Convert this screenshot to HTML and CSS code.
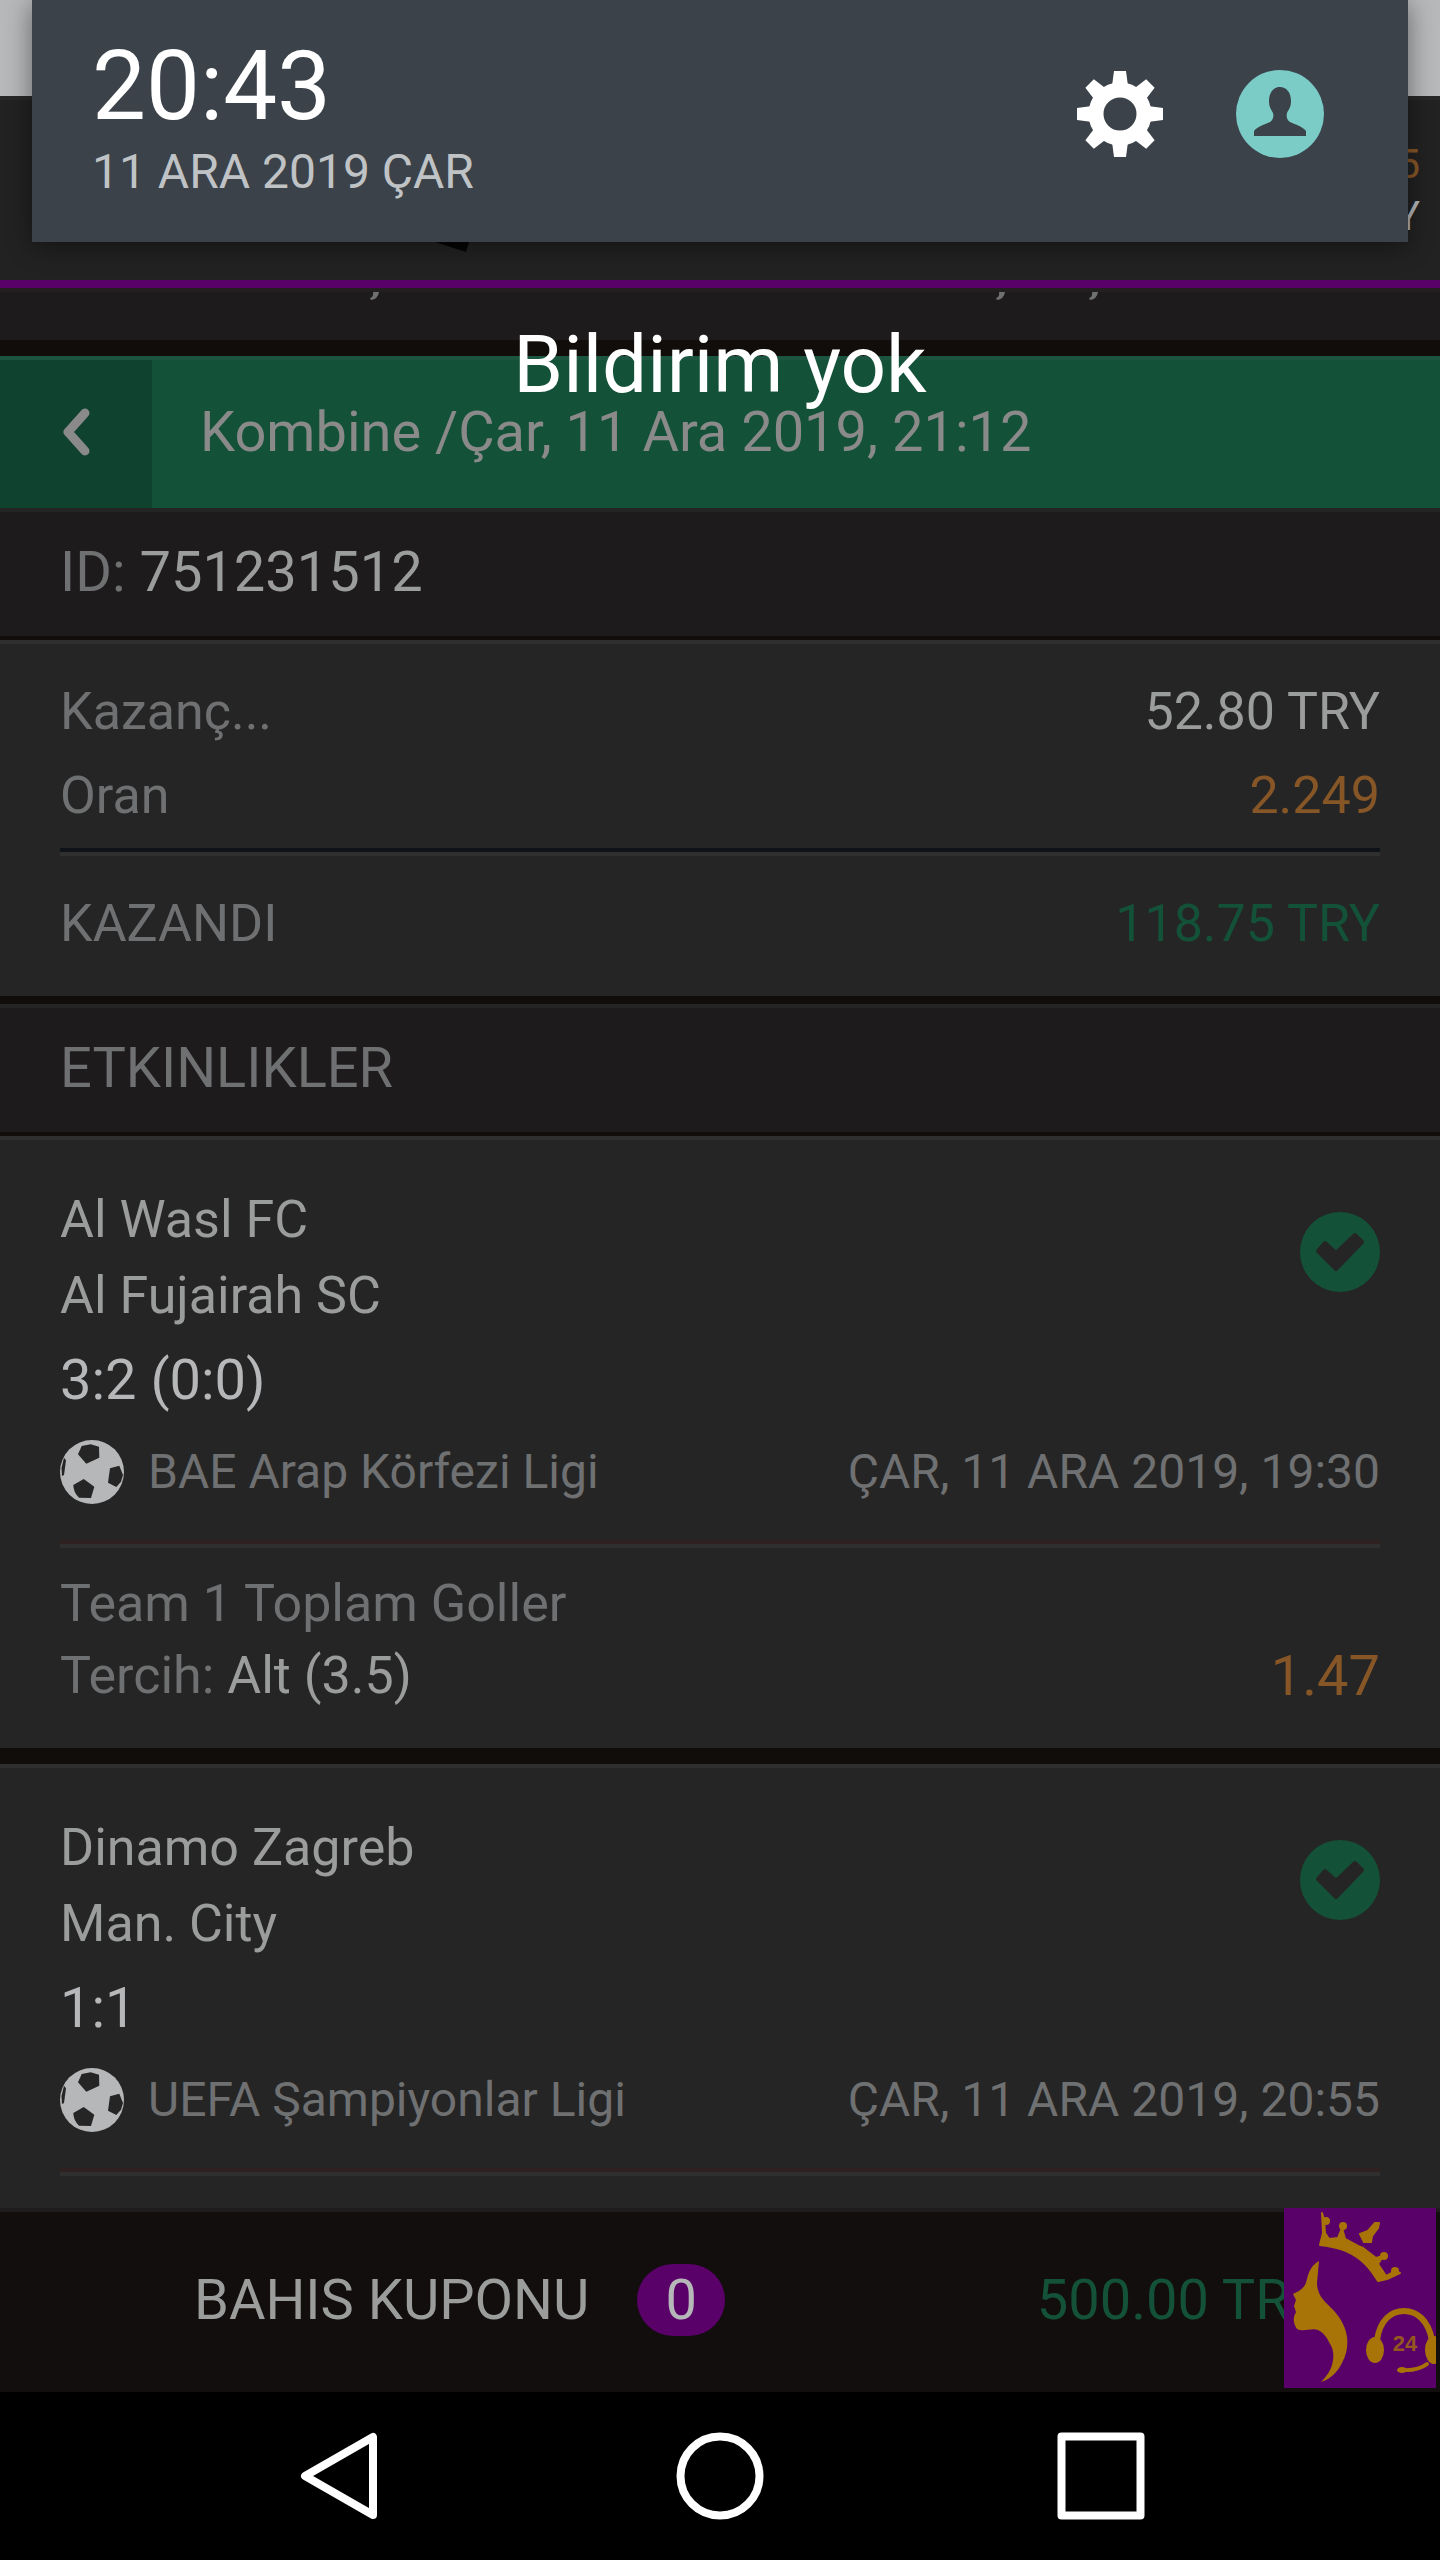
FILE: index.html
```html
<!DOCTYPE html>
<html lang="tr">
<head>
    <meta charset="UTF-8">
    <meta name="viewport" content="width=device-width, initial-scale=1.0">
    <title>Kombine</title>
    <link rel="stylesheet" href="styles.css">
</head>
<body>

<svg class="sprite" aria-hidden="true">
    <symbol id="ball" viewBox="0 0 64 64">
        <circle cx="32" cy="32" r="32" fill="#b5b7b9"/>
        <g fill="#252525">
            <path d="M21.7 6 30.7 4.3 39 6.7 39.3 17.7 26.3 23.7 18 14.3Z"/>
            <path d="M23.7 39 34.3 46.7 31 58 19 57.7Q13.3 52 13.3 45Z"/>
            <path d="M50 28.3 59.3 25.7 63 35 61 41.7 56.3 47 48 42.7Z"/>
            <path d="M4 17.7 6 20.3 4 35 2 36 1.5 28Z"/>
        </g>
    </symbol>
    <symbol id="check" viewBox="0 0 80 80">
        <circle cx="40" cy="40" r="40" fill="#135139"/>
        <path d="M25 31 36 41 55 23 62 30 36 57 18 39Z" fill="#252525" stroke="#252525" stroke-width="4" stroke-linejoin="round"/>
    </symbol>
</svg>

<div class="app">
    <div class="status-bar"></div>

    <header class="site-header">
        <svg class="logo-tip" viewBox="0 0 34 10" aria-hidden="true"><path d="M0 0H34L31 10Z" fill="#050505"/></svg>
        <div class="account">
            <span class="orange">5</span>
            <span class="balance">Y</span>
        </div>
    </header>

    <main class="content">
        <div class="tabs">
            <svg class="cedilla first" viewBox="0 0 9 8" aria-hidden="true"><path d="M3 0H9Q8 7 1 8L0 6Q4 5 3 0Z"/></svg>
            <svg class="cedilla" viewBox="0 0 9 8" aria-hidden="true"><path d="M3 0H9Q8 7 1 8L0 6Q4 5 3 0Z"/></svg>
            <svg class="cedilla" viewBox="0 0 9 8" aria-hidden="true"><path d="M3 0H9Q8 7 1 8L0 6Q4 5 3 0Z"/></svg>
        </div>

        <div class="title-bar">
            <button class="back" aria-label="Geri">
                <svg width="28" height="48" viewBox="0 0 28 48"><path d="M23 5 6 24 23 43" fill="none" stroke="#8a8a8a" stroke-width="9" stroke-linecap="round" stroke-linejoin="round"/></svg>
            </button>
            <h1>Kombine /Çar, 11 Ara 2019, 21:12</h1>
        </div>

        <div class="band">ID: <span class="light">751231512</span></div>

        <section class="summary">
            <div class="row"><span>Kazanç...</span><span class="light">52.80 TRY</span></div>
            <div class="row"><span>Oran</span><span class="orange">2.249</span></div>
            <div class="row total"><span>KAZANDI</span><span class="green">118.75 TRY</span></div>
        </section>

        <h2 class="band">ETKINLIKLER</h2>

        <article class="event">
            <div class="match">
                <div class="teams">
                    <p class="light">Al Wasl FC</p>
                    <p class="light">Al Fujairah SC</p>
                    <p class="score">3:2 (0:0)</p>
                </div>
                <svg class="check"><use href="#check"/></svg>
            </div>
            <div class="league">
                <svg class="ball"><use href="#ball"/></svg>
                <span>BAE Arap Körfezi Ligi</span>
                <time>ÇAR, 11 ARA 2019, 19:30</time>
            </div>
            <div class="pick">
                <p>Team 1 Toplam Goller</p>
                <div class="pick-row">
                    <p>Tercih: <span class="light">Alt (3.5)</span></p>
                    <span class="odds orange">1.47</span>
                </div>
            </div>
        </article>

        <article class="event">
            <div class="match">
                <div class="teams">
                    <p class="light">Dinamo Zagreb</p>
                    <p class="light">Man. City</p>
                    <p class="score">1:1</p>
                </div>
                <svg class="check"><use href="#check"/></svg>
            </div>
            <div class="league">
                <svg class="ball"><use href="#ball"/></svg>
                <span>UEFA Şampiyonlar Ligi</span>
                <time>ÇAR, 11 ARA 2019, 20:55</time>
            </div>
            <div class="pick"></div>
        </article>
    </main>

    <footer class="coupon">
        <span class="light">BAHIS KUPONU</span>
        <span class="count">0</span>
        <span class="amount green">500.00 TRY</span>
        <button class="support" aria-label="Canlı destek">
            <svg width="152" height="180" viewBox="0 0 152 180" fill="#a87408">
                <path stroke="#a87408" stroke-width="2" stroke-linejoin="round" d="M36 37 39 25 38 5 40 12 41 25 45 31 54 30 58 20 61 31 74 38 79 40 92 50 99 48 94 56 102 68 111 63 116 65 103 71 94 73C86 60 78 50 62 43 52 39 44 38 36 37Z"/>
                <circle cx="42" cy="13" r="4"/>
                <circle cx="59" cy="18" r="4"/>
                <path stroke="#a87408" stroke-width="2" stroke-linejoin="round" d="M76 26 84 23 91 15 95 15 94 20 88 28 87 34 80 34Z"/>
                <circle cx="100" cy="48" r="4"/>
                <circle cx="111" cy="63" r="4"/>
                <path d="M35 53C28 57 26 62 24 67 23 71 22 75 21 77 18 82 13 84 9 86L12 92 10 98 12 104Q9 109 10 114C11 119 13 122 16 122 22 123 29 120 34 122 40 125 43 130 45 134 49 140 50 146 49 152 48 161 43 168 37 174 47 171 54 163 58 155 63 146 64 137 63 129 62 120 57 111 51 104 46 98 39 93 36 87 34 83 33 79 33 75Z"/>
                <path d="M93 132C96 112 107 103 120 103S144 112 148 132" fill="none" stroke="#a87408" stroke-width="6"/>
                <ellipse cx="91" cy="142" rx="9" ry="13"/>
                <ellipse cx="150" cy="142" rx="9" ry="14"/>
                <path d="M143 156Q134 163 118 162" fill="none" stroke="#a87408" stroke-width="4" stroke-linecap="round"/>
                <ellipse cx="118" cy="162" rx="5" ry="3"/>
                <text class="hours" x="121" y="143">24</text>
            </svg>
        </button>
    </footer>

    <nav class="system-nav">
        <button aria-label="Geri"><svg viewBox="0 0 88 88"><path d="M78 5V83L10 44Z"/></svg></button>
        <button aria-label="Ana ekran"><svg viewBox="0 0 88 88"><circle cx="44" cy="44" r="39.500"/></svg></button>
        <button aria-label="Son uygulamalar"><svg viewBox="0 0 88 88"><rect x="4.500" y="4.500" width="79" height="79"/></svg></button>
    </nav>
</div>

<!-- bildirim paneli -->
<div class="shade">
    <div class="shade-panel">
        <div>
            <p class="clock">20:43</p>
            <p class="date">11 ARA 2019 ÇAR</p>
        </div>
        <div class="shade-actions">
            <button aria-label="Ayarlar">
                <svg viewBox="-44 -44 88 88" fill="#fff">
                    <circle r="24" fill="none" stroke="#fff" stroke-width="15"/>
                    <g id="teeth"><path id="tooth" d="M-8-28-6-43H6L8-28Z"/><use href="#tooth" transform="rotate(45)"/></g>
                    <use href="#teeth" transform="rotate(90)"/>
                    <use href="#teeth" transform="rotate(180)"/>
                    <use href="#teeth" transform="rotate(270)"/>
                </svg>
            </button>
            <button aria-label="Kullanıcı">
                <svg viewBox="0 0 88 88">
                    <circle cx="44" cy="44" r="44" fill="#7bcbc7"/>
                    <path d="M44 17C50 17 55 22 55 31 55 37 53 39 51 43 50 47 51 50 54 52 60 55 66 56 70 61V66H18V61C22 56 28 55 34 52 37 50 38 47 37 43 35 39 33 37 33 31 33 22 38 17 44 17Z" fill="#3b4249"/>
                </svg>
            </button>
        </div>
    </div>
    <p class="shade-empty">Bildirim yok</p>
</div>

</body>
</html>
```
FILE: styles.css
```css
* {
    box-sizing: border-box;
}
body {
    margin: 0;
    background-color: #000;
    color: #6f7071;
    font-family: Roboto, sans-serif;
    font-size: 52px;
}
p, h1, h2 {
    margin: 0;
    font-weight: 400;
}
button {
    padding: 0;
    border: none;
    background: none;
    cursor: pointer;
}
svg {
    display: block;
}
.sprite {
    position: absolute;
    width: 0;
    height: 0;
}
.light {
    color: #9b9d9c;
}
.orange {
    color: #865627;
}
.green {
    color: #135139;
}

.app {
    display: flex;
    flex-direction: column;
    height: 100vh;
}
.status-bar {
    flex: none;
    height: 96px;
    background-color: #b7b8ba;
}
.site-header {
    position: relative;
    display: flex;
    flex: none;
    justify-content: flex-end;
    height: 192px;
    padding: 39px 20px 0;
    background-color: #222;
    border-top: 4px solid #282828;
    border-bottom: 8px solid #5a0069;
}
.logo-tip {
    position: absolute;
    left: 435px;
    top: 142px;
    width: 34px;
}
.account {
    display: flex;
    flex-direction: column;
    align-items: flex-end;
    font-size: 40px;
    line-height: 52px;
}
.balance {
    color: #b5b7b9;
}

.content {
    flex: 1;
    min-height: 0;
    overflow: hidden;
    background-color: #252525;
}
.tabs {
    display: flex;
    gap: 84px;
    height: 68px;
    background-color: #1e1b1c;
    border-top: 4px solid #231f20;
    border-bottom: 16px solid #100d0b;
}
.cedilla {
    width: 9px;
    height: 8px;
    fill: #6f7071;
}
.cedilla.first {
    margin: 0 533px 0 370px;
}
.title-bar {
    display: flex;
    height: 152px;
    background-color: #135139;
    border-top: 4px solid #1b5540;
}
.title-bar h1 {
    padding: 0 48px;
    color: #8a8a8a;
    font-size: 56px;
    line-height: 144px;
}
.back {
    display: flex;
    justify-content: center;
    align-items: center;
    width: 152px;
    padding-bottom: 4px;
    background-color: #104230;
}
.band {
    height: 132px;
    padding: 0 60px;
    background-color: #1e1b1c;
    border-top: 4px solid #252425;
    border-bottom: 4px solid #100d0c;
    font-size: 56px;
    line-height: 120px;
}
.summary {
    padding: 26px 60px 30px;
    border-top: 4px solid #2f2f2f;
    border-bottom: 8px solid #100d0c;
    line-height: 84px;
}
.row {
    display: flex;
    justify-content: space-between;
}
.row.total {
    margin-top: 10px;
    padding-top: 30px;
    border-top: 4px solid #10121a;
    box-shadow: inset 0 4px #2f2f2f;
}

.event {
    padding: 42px 60px 36px;
    border-top: 4px solid #2f2f2f;
    border-bottom: 16px solid #100d0b;
}
.match {
    display: flex;
    justify-content: space-between;
    line-height: 76px;
}
.score {
    color: #b5b7b9;
    font-size: 56px;
    line-height: 92px;
}
.check {
    width: 80px;
    height: 80px;
    margin-top: 30px;
}
.league {
    display: flex;
    align-items: center;
    padding: 14px 0 36px;
    font-size: 48px;
    line-height: 64px;
}
.league time {
    margin-left: auto;
}
.ball {
    width: 64px;
    height: 64px;
    margin-right: 24px;
}
.pick {
    padding-top: 24px;
    border-top: 4px solid #2f2122;
    box-shadow: inset 0 4px #2f2f2f;
    line-height: 72px;
}
.pick-row {
    display: flex;
    justify-content: space-between;
}
.odds {
    font-size: 56px;
}

.coupon {
    position: relative;
    display: flex;
    flex: none;
    align-items: center;
    height: 184px;
    padding: 0 118px 0 194px;
    background-color: #120e0d;
    box-shadow: inset 0 4px #1e1c1c;
    font-size: 56px;
}
.count {
    width: 88px;
    margin-left: 48px;
    border-radius: 36px;
    background-color: #5a0069;
    color: #b5b7b9;
    line-height: 72px;
    text-align: center;
}
.amount {
    margin-left: auto;
}
.support {
    position: absolute;
    top: 0;
    right: 4px;
    background-color: #5a0069;
}
.hours {
    font-size: 22px;
    font-weight: 700;
    text-anchor: middle;
    opacity: 0.75;
}

.system-nav {
    display: flex;
    flex: none;
    justify-content: space-between;
    align-items: center;
    height: 168px;
    padding: 0 295px;
}
.system-nav svg {
    width: 88px;
    fill: none;
    stroke: #fff;
    stroke-width: 8px;
    stroke-linejoin: round;
}

.shade {
    position: absolute;
    top: 0;
    left: 32px;
    right: 32px;
}
.shade-panel {
    display: flex;
    justify-content: space-between;
    align-items: center;
    height: 242px;
    padding: 0 84px 2px 60px;
    background-color: #3b4249;
    box-shadow: 0 4px 24px rgba(0, 0, 0, 0.45);
}
.clock {
    color: #fff;
    font-size: 96px;
    line-height: 104px;
}
.date {
    color: #c0c3c5;
    font-size: 48px;
    line-height: 68px;
}
.shade-actions {
    display: flex;
    gap: 72px;
    padding-bottom: 12px;
}
.shade-actions svg {
    width: 88px;
}
.shade-empty {
    padding-top: 75px;
    color: #fff;
    font-size: 80px;
    line-height: 96px;
    text-align: center;
}
```
